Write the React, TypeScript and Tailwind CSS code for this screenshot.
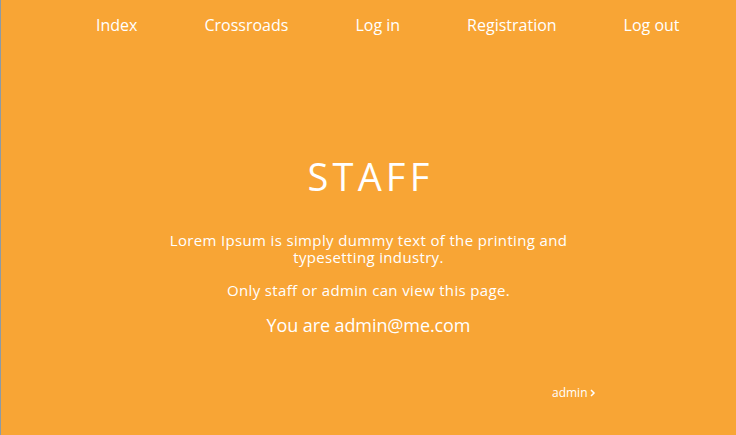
import React from 'react'

const links = ['Index', 'Crossroads', 'Log in', 'Registration', 'Log out']

export default function App() {
  return (
    <div
      className="min-h-[435px] w-full bg-[#f8a535] border-l border-[#8d9aa5] text-white"
      style={{ fontFamily: '"Open Sans", "Liberation Sans", sans-serif' }}
    >
      <nav className="flex gap-[67px] pl-[95px] pt-[14px]">
        {links.map((l) => (
          <a key={l} href="#" className="text-[16px] leading-[22px]">
            {l}
          </a>
        ))}
      </nav>

      <main className="flex flex-col items-center pt-[118px]">
        <h1 className="text-[38px] leading-[44px] tracking-[0.11em] font-normal pl-[4px]">STAFF</h1>
        <p className="mt-[34px] w-[420px] text-center text-[15px] leading-[17px] tracking-[0.35px]">
          Lorem Ipsum is simply dummy text of the printing and typesetting industry.
        </p>
        <p className="mt-[16px] text-[15px] leading-[17px] tracking-[0.35px]">
          Only staff or admin can view this page.
        </p>
        <p className="mt-[15px] text-[18px] leading-[22px] tracking-[-0.1px]">You are admin@me.com</p>
        <div className="w-[440px] flex justify-end mt-[49px]">
          <a href="#" className="text-[12px] leading-[16px] flex items-center gap-[2px] mr-[-7px]">
            admin
            <svg width="6" height="8" viewBox="0 0 6 8" fill="none" stroke="white" strokeWidth="1.5">
              <path d="M1 1l3 3-3 3" />
            </svg>
          </a>
        </div>
      </main>
    </div>
  )
}
